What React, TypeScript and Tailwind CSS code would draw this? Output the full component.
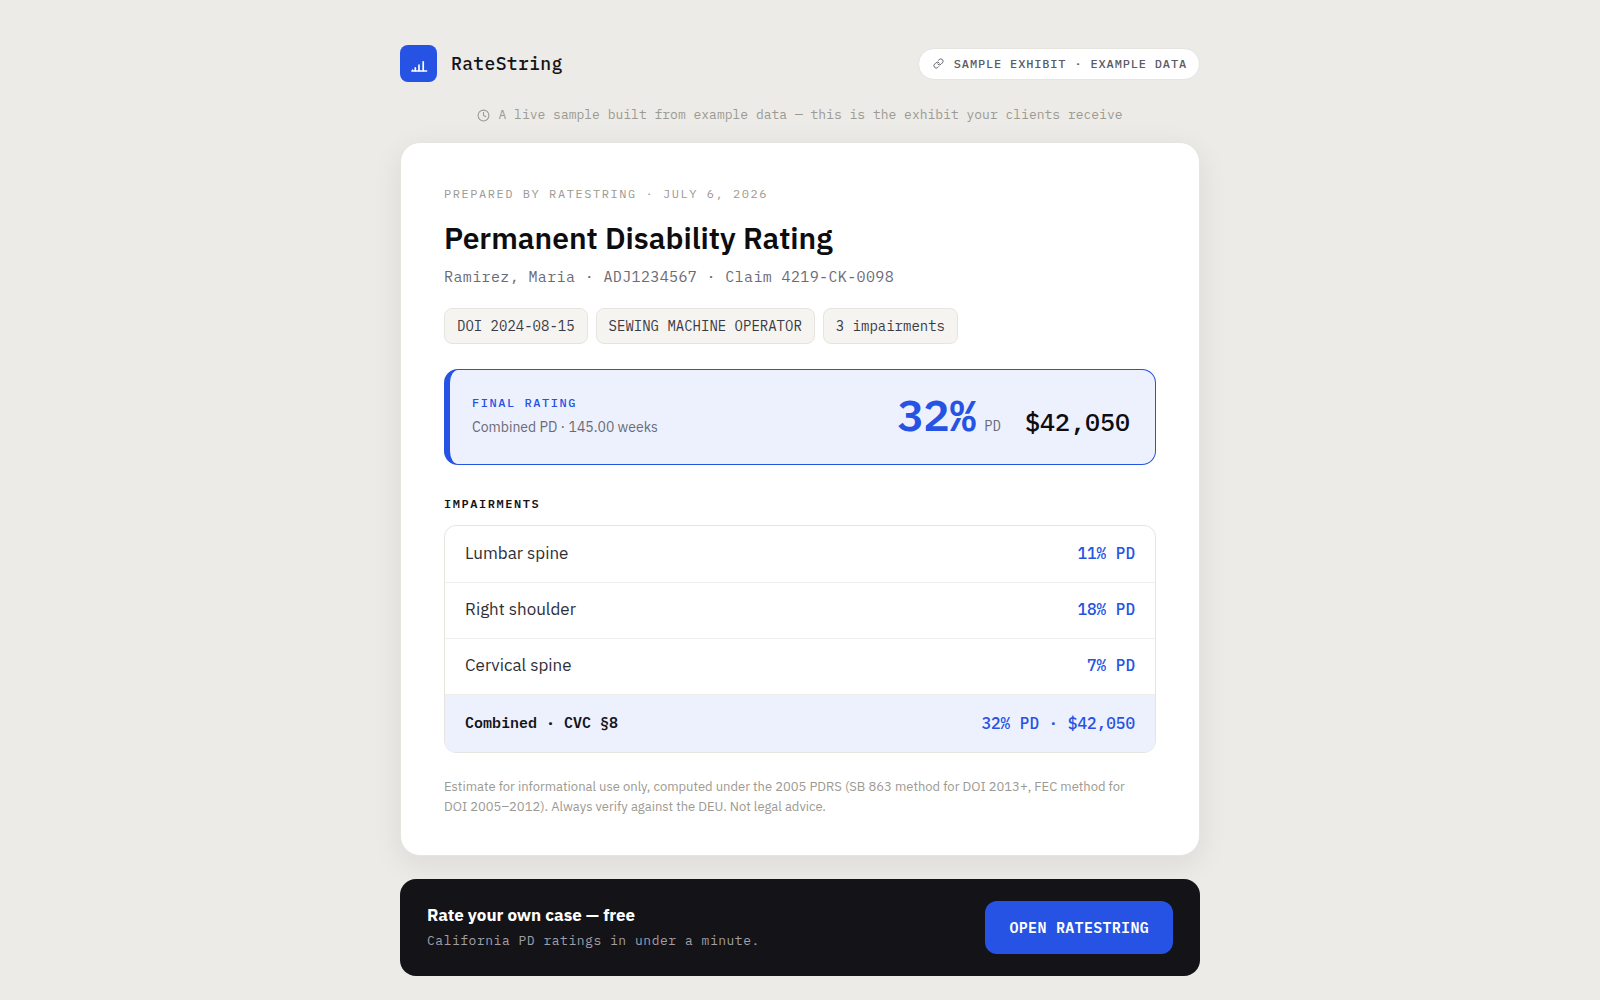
import { Clock, Link } from "lucide-react";

const MONO = "font-['IBM_Plex_Mono','Liberation_Mono',monospace]";

const tags = ["DOI 2024-08-15", "SEWING MACHINE OPERATOR", "3 impairments"];

const impairments = [
  { name: "Lumbar spine", pd: "11% PD" },
  { name: "Right shoulder", pd: "18% PD" },
  { name: "Cervical spine", pd: "7% PD" },
];

function Logo() {
  return (
    <div className="flex h-[37px] w-[37px] items-center justify-center rounded-lg bg-[#2653e3]">
      <svg viewBox="0 0 18 18" className="mt-1 h-[18px] w-[18px]" fill="none" stroke="white">
        <path d="M1.8 14h14.8" strokeWidth="1.5" strokeLinecap="round" />
        <path d="M5.3 13.5v-2.7M9 13.5V8.2M13.2 13.5V4.8" strokeWidth="1.7" strokeLinecap="round" />
        <path d="M2.6 13.5v-.6" strokeWidth="1.2" strokeLinecap="round" />
      </svg>
    </div>
  );
}

function Header() {
  return (
    <header className="flex items-center justify-between">
      <div className="flex items-center gap-[14px]">
        <Logo />
        <span className={`${MONO} text-lg font-medium tracking-[0.02em] text-[#141418]`}>RateString</span>
      </div>
      <div className={`${MONO} flex h-8 items-center gap-[10px] rounded-full border border-[#e6e4de] bg-white pr-3 pl-[14px] text-xs font-medium tracking-[0.07em] text-[#5b5b66]`}>
        <Link size={11} strokeWidth={2} />
        <span>SAMPLE EXHIBIT · EXAMPLE DATA</span>
      </div>
    </header>
  );
}

function FinalRating() {
  return (
    <section className="mt-[25px] flex h-24 items-center justify-between rounded-[14px] border border-l-6 border-[#2653e3] bg-[#edf1fe] pr-[25px] pb-1 pl-[22px]">
      <div>
        <h2 className={`${MONO} text-xs leading-5 font-medium tracking-[0.13em] text-[#2653e3]`}>FINAL RATING</h2>
        <p className="mt-1 text-sm leading-5 text-[#6b6b76]">Combined PD · 145.00 weeks</p>
      </div>
      <div className={`${MONO} flex items-baseline`}>
        <span className="text-[44px] leading-[52px] font-semibold text-[#2653e3]">32%</span>
        <span className="ml-2 text-sm text-[#6b6b76]">PD</span>
        <span className="ml-6 text-[25px] font-medium text-[#0d0d10]">$42,050</span>
      </div>
    </section>
  );
}

function Impairments() {
  return (
    <section className="mt-[29px]">
      <h2 className={`${MONO} text-xs leading-5 font-semibold tracking-[0.13em] text-[#141418]`}>IMPAIRMENTS</h2>
      <div className="mt-[11px] overflow-hidden rounded-xl border border-[#e6e4de]">
        <table className="w-full border-collapse">
          <tbody>
            {impairments.map((row) => (
              <tr key={row.name} className="h-14 border-b border-[#efeeea]">
                <th scope="row" className="px-5 text-left text-[17px] font-normal text-[#2f2f38]">
                  {row.name}
                </th>
                <td className={`${MONO} px-5 pb-0.5 text-right text-base font-medium text-[#2653e3]`}>{row.pd}</td>
              </tr>
            ))}
            <tr className={`${MONO} h-[58px] bg-[#edf1fe]`}>
              <th scope="row" className="px-5 text-left text-[15px] font-semibold text-[#141418]">
                Combined · CVC §8
              </th>
              <td className="px-5 text-right text-base font-medium text-[#2653e3]">32% PD · $42,050</td>
            </tr>
          </tbody>
        </table>
      </div>
    </section>
  );
}

export default function App() {
  return (
    <div className="min-h-screen bg-[#ecebe7] px-6 pt-[45px] pb-6 font-['IBM_Plex_Sans',Roboto,sans-serif]">
      <div className="mx-auto max-w-[800px]">
        <Header />

        <p className={`${MONO} mt-[23px] flex items-center justify-center gap-2 text-[13px] leading-5 text-[#9c9a92]`}>
          <Clock size={13} strokeWidth={2} />
          A live sample built from example data — this is the exhibit your clients receive
        </p>

        <main className="mt-[17px] rounded-[20px] border border-[#e6e4de] bg-white px-[43px] pt-[41px] pb-[38px] shadow-[0_8px_30px_rgba(20,20,24,0.08)]">
          <p className={`${MONO} text-xs leading-5 tracking-[0.13em] text-[#9c9a92]`}>
            PREPARED BY RATESTRING · JULY 6, 2026
          </p>
          <h1 className="mt-[14px] text-3xl leading-10 font-semibold text-[#0d0d10]">Permanent Disability Rating</h1>
          <p className={`${MONO} mt-[7px] text-[15px] leading-6 tracking-wide text-[#6b6b76]`}>
            Ramirez, Maria · ADJ1234567 · Claim 4219-CK-0098
          </p>
          <ul className={`${MONO} mt-[19px] flex flex-wrap gap-2 text-sm text-[#3b3b45]`}>
            {tags.map((tag) => (
              <li key={tag} className="rounded-lg border border-[#e6e4de] bg-[#f5f4f0] px-3 py-2 leading-[18px]">
                {tag}
              </li>
            ))}
          </ul>
          <FinalRating />
          <Impairments />
          <p className="mt-6 pr-3 text-[13px] leading-5 text-[#9c9a92]">
            Estimate for informational use only, computed under the 2005 PDRS (SB 863 method for DOI 2013+, FEC method for
            DOI 2005–2012). Always verify against the DEU. Not legal advice.
          </p>
        </main>

        <section className="mt-[23px] flex items-center justify-between rounded-2xl bg-[#141418] px-[27px] py-[22px]">
          <div className="pb-0.5">
            <h2 className="text-[17px] leading-6 font-bold text-white">Rate your own case — free</h2>
            <p className={`${MONO} mt-1 text-[13px] leading-5 tracking-[0.04em] text-[#a09fa8]`}>
              California PD ratings in under a minute.
            </p>
          </div>
          <a
            href="#"
            className={`${MONO} rounded-xl bg-[#2653e3] px-6 py-4 text-[15px] leading-[21px] font-semibold tracking-[0.02em] text-white`}
          >
            OPEN RATESTRING
          </a>
        </section>
      </div>
    </div>
  );
}
